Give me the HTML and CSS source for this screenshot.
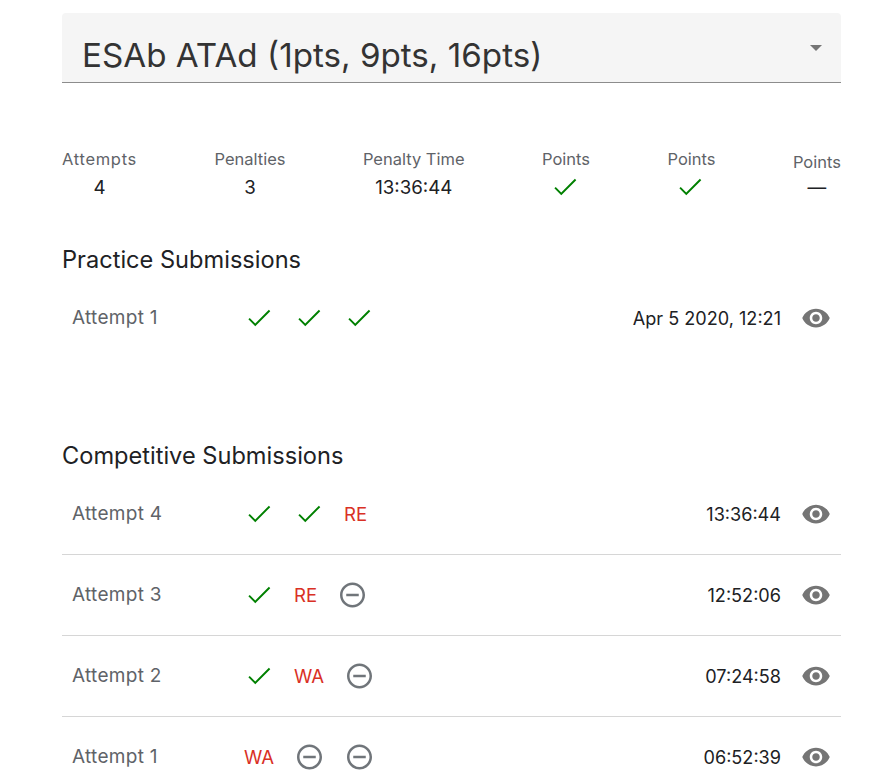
FILE: index.html
```html
<!DOCTYPE html>
<html lang="en">
<head>
    <meta charset="UTF-8">
    <meta name="viewport" content="width=device-width, initial-scale=1.0">
    <title>ESAb ATAd</title>
    <link rel="stylesheet" href="styles.css">
</head>
<body>

    <!-- Icons used in the rows -->
    <svg class="icon-defs" aria-hidden="true">
        <symbol id="check" viewBox="0 0 21.6 24">
            <path d="M9 16.3L4.6 11.9l-1.1 1.1L9 18.5 21 6.5l-1.1-1.1z"/>
        </symbol>
        <symbol id="minus" viewBox="2 0 21.6 24">
            <path d="M7 11v2h10v-2H7zm5-9C6.48 2 2 6.48 2 12s4.48 10 10 10 10-4.48 10-10S17.52 2 12 2zm0 18c-4.41 0-8-3.59-8-8s3.59-8 8-8 8 3.59 8 8-3.59 8-8 8z"/>
        </symbol>
        <symbol id="eye" viewBox="0 0 24 24">
            <path d="M12 4.5C7 4.5 2.73 7.61 1 12c1.73 4.39 6 7.5 11 7.5s9.27-3.11 11-7.5c-1.73-4.39-6-7.5-11-7.5zM12 17c-2.76 0-5-2.24-5-5s2.24-5 5-5 5 2.24 5 5-2.24 5-5 5zm0-8c-1.66 0-3 1.34-3 3s1.34 3 3 3 3-1.34 3-3-1.34-3-3-3z"/>
        </symbol>
    </svg>

    <main class="page">
        <div class="select">
            <span class="select-text">ESAb ATAd (1pts, 9pts, 16pts)</span>
            <span class="select-arrow"></span>
        </div>

        <div class="stats">
            <div class="stat stat-wide">
                <div class="stat-label">Attempts</div>
                <div class="stat-value">4</div>
            </div>
            <div class="stat">
                <div class="stat-label">Penalties</div>
                <div class="stat-value">3</div>
            </div>
            <div class="stat">
                <div class="stat-label">Penalty Time</div>
                <div class="stat-value">13:36:44</div>
            </div>
            <div class="stat">
                <div class="stat-label">Points</div>
                <div class="stat-value"><svg class="icon-check"><use href="#check"/></svg></div>
            </div>
            <div class="stat">
                <div class="stat-label">Points</div>
                <div class="stat-value"><svg class="icon-check"><use href="#check"/></svg></div>
            </div>
            <div class="stat stat-short">
                <div class="stat-label">Points</div>
                <div class="stat-value">—</div>
            </div>
        </div>

        <h2 class="section-title">Practice Submissions</h2>
        <div class="row row-plain">
            <div class="row-name">Attempt 1</div>
            <div class="results">
                <svg class="icon-check"><use href="#check"/></svg>
                <svg class="icon-check"><use href="#check"/></svg>
                <svg class="icon-check"><use href="#check"/></svg>
            </div>
            <div class="row-time">Apr 5 2020, 12:21</div>
            <svg class="icon-eye"><use href="#eye"/></svg>
        </div>

        <h2 class="section-title section-gap">Competitive Submissions</h2>
        <div class="row">
            <div class="row-name">Attempt 4</div>
            <div class="results">
                <svg class="icon-check"><use href="#check"/></svg>
                <svg class="icon-check"><use href="#check"/></svg>
                <span class="verdict">RE</span>
            </div>
            <div class="row-time">13:36:44</div>
            <svg class="icon-eye"><use href="#eye"/></svg>
        </div>
        <div class="row">
            <div class="row-name">Attempt 3</div>
            <div class="results">
                <svg class="icon-check"><use href="#check"/></svg>
                <span class="verdict">RE</span>
                <svg class="icon-minus"><use href="#minus"/></svg>
            </div>
            <div class="row-time">12:52:06</div>
            <svg class="icon-eye"><use href="#eye"/></svg>
        </div>
        <div class="row">
            <div class="row-name">Attempt 2</div>
            <div class="results">
                <svg class="icon-check"><use href="#check"/></svg>
                <span class="verdict">WA</span>
                <svg class="icon-minus"><use href="#minus"/></svg>
            </div>
            <div class="row-time">07:24:58</div>
            <svg class="icon-eye"><use href="#eye"/></svg>
        </div>
        <div class="row row-plain">
            <div class="row-name">Attempt 1</div>
            <div class="results">
                <span class="verdict">WA</span>
                <svg class="icon-minus"><use href="#minus"/></svg>
                <svg class="icon-minus"><use href="#minus"/></svg>
            </div>
            <div class="row-time">06:52:39</div>
            <svg class="icon-eye"><use href="#eye"/></svg>
        </div>
    </main>

</body>
</html>
```

FILE: styles.css
```css
body {
    margin: 0;
    font-family: Inter, "Open Sans", sans-serif;
    background-color: #fff;
    color: #202124;
}

.icon-defs {
    display: none;
}

.page {
    padding: 13px 34px 0 62px;
}

/* Select */
.select {
    display: flex;
    justify-content: space-between;
    height: 69px;
    padding: 0 19px 0 20px;
    background-color: #f5f5f5;
    border-bottom: 1px solid #8c8c8c;
    border-radius: 4px 4px 0 0;
}

.select-text {
    margin-top: 21px;
    font-size: 33.2px;
    line-height: 42px;
    color: #333;
}

.select-arrow {
    margin-top: 32px;
    width: 0;
    height: 0;
    border-left: 6px solid transparent;
    border-right: 6px solid transparent;
    border-top: 6px solid #757575;
}

/* Stats */
.stats {
    display: flex;
    justify-content: space-between;
    margin-top: 63px;
}

.stat {
    text-align: center;
}

.stat-label {
    font-size: 16.5px;
    line-height: 26px;
    color: #5f6368;
}

.stat-wide .stat-label {
    letter-spacing: 0.7px;
}

.stat-value {
    display: flex;
    justify-content: center;
    align-items: center;
    height: 30px;
    font-size: 18.7px;
    color: #202124;
}

.stat-value .icon-check {
    margin-left: -5px;
}

.stat-short {
    padding-top: 3px;
}

.stat-short .stat-value {
    height: 25px;
}

/* Rows */
.section-title {
    margin: 43px 0 3px 0;
    font-size: 23.6px;
    font-weight: 400;
    line-height: 30px;
}

.section-gap {
    margin: 82px 0 3px 0;
}

.row {
    display: flex;
    align-items: center;
    box-sizing: border-box;
    height: 81px;
    padding: 0 10px 1px 10px;
    border-bottom: 1px solid #d6d6d6;
}

.row-plain {
    border-bottom-color: transparent;
}

.row-name {
    width: 172px;
    font-size: 19px;
    letter-spacing: 0.3px;
    color: #5f6368;
}

.results {
    display: flex;
    align-items: center;
    gap: 23px;
}

.verdict {
    font-size: 18.6px;
    color: #d93025;
}

.icon-check {
    width: 27px;
    height: 30px;
    fill: #008000;
}

.icon-minus {
    width: 27px;
    height: 30px;
    fill: #70757a;
}

.row-time {
    margin-left: auto;
    font-size: 18.1px;
    color: #202124;
}

.icon-eye {
    width: 30px;
    height: 30px;
    margin-left: 20px;
    fill: #757575;
}
```
